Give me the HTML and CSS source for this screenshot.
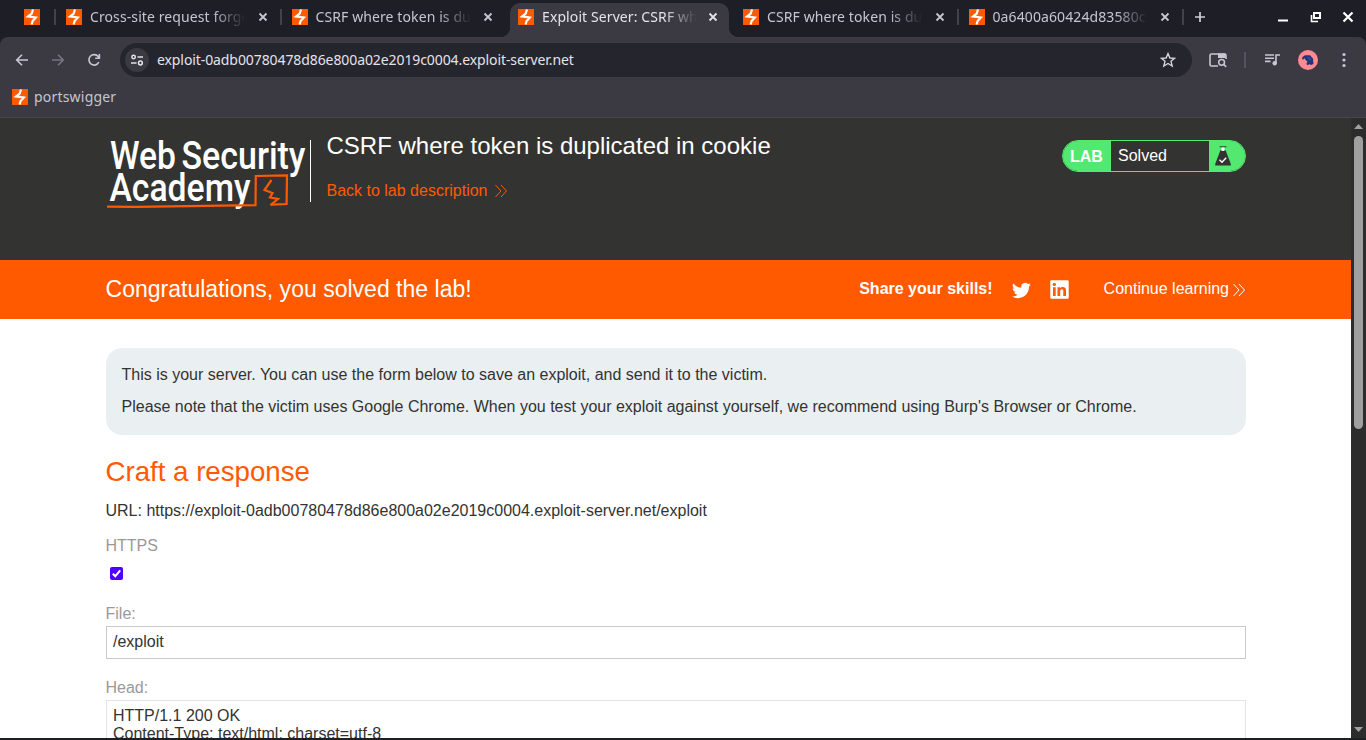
FILE: index.html
```html
<!DOCTYPE html>
<html lang="en">
<head>
<meta charset="utf-8">
<title>Exploit Server: CSRF where token is duplicated in cookie</title>
<link rel="stylesheet" href="styles.css">
</head>
<body>
<svg class="defs" width="0" height="0">
  <symbol id="fav" viewBox="0 0 16 16"><rect width="16" height="16" fill="#ff5a00"/><path d="M7.600 0.600H9.800L8.800 5.200 13 7.300 9.600 11.600 10.600 12.400 7 15.400 6.200 15.400 7.800 9.900 3 8 6.600 4Z" fill="#fff"/><path d="M8 4.500 6 7.300 8.600 8.300 10.200 7.600Z" fill="#fff"/><path d="M9.600 8.400 7.600 11.800 8.300 8.900Z" fill="#ff5a00"/></symbol>
  <symbol id="bolt" viewBox="0 0 16 16"><rect width="16" height="16" fill="#ff5a00"/><path d="M9 .500 7.700 4.500 4 7.400 11.800 8.500 8.600 12 7.600 15.500" fill="none" stroke="#fff" stroke-width="2.200"/></symbol>
  <symbol id="x" viewBox="0 0 10 10"><path d="M1.500 1.500 8.500 8.500M8.500 1.500 1.500 8.500" fill="none" stroke="currentColor" stroke-width="1.8"/></symbol>
  <symbol id="chev" viewBox="0 0 14 14"><path d="M1.500 1 7 7 1.500 13M7 1 12.500 7 7 13" fill="none" stroke="currentColor" stroke-width="1"/></symbol>
</svg>
<div class="window">
  <header class="tabs">
    <div class="pinned"><svg class="fav"><use href="#bolt"/></svg></div>
    <i class="sep"></i>
    <div class="tab"><svg class="fav"><use href="#bolt"/></svg><span class="title">Cross-site request forgery</span><svg class="close"><use href="#x"/></svg></div>
    <i class="sep"></i>
    <div class="tab"><svg class="fav"><use href="#bolt"/></svg><span class="title t-csrf">CSRF where token is duplicated</span><svg class="close"><use href="#x"/></svg></div>
    <i class="sep none"></i>
    <div class="tab active"><svg class="fav"><use href="#bolt"/></svg><span class="title">Exploit Server: CSRF where</span><svg class="close"><use href="#x"/></svg></div>
    <i class="sep none"></i>
    <div class="tab"><svg class="fav"><use href="#bolt"/></svg><span class="title">CSRF where token is duplicated</span><svg class="close"><use href="#x"/></svg></div>
    <i class="sep"></i>
    <div class="tab"><svg class="fav"><use href="#bolt"/></svg><span class="title">0a6400a60424d83580c</span><svg class="close"><use href="#x"/></svg></div>
    <i class="sep"></i>
    <svg class="plus" viewBox="0 0 12 12"><path d="M6 1V11M1 6H11" stroke="#d0ced8" stroke-width="1.7"/></svg>
    <div class="wincontrols">
      <svg width="12" height="12" viewBox="0 0 12 12"><path d="M1 9.500H11" stroke="#fff" stroke-width="2"/></svg>
      <svg width="12" height="12" viewBox="0 0 12 12"><path d="M4 2H10V7H4Z" fill="none" stroke="#fff" stroke-width="2"/><path d="M1.500 4V10.500H8" fill="none" stroke="#fff" stroke-width="1.600"/></svg>
      <svg width="12" height="12" viewBox="0 0 12 12"><path d="M1.500 1.500 10.500 10.500M10.500 1.500 1.500 10.500" stroke="#fff" stroke-width="2.200"/></svg>
    </div>
  </header>
  <div class="chrome">
    <div class="toolbar">
      <svg class="nav" viewBox="0 0 16 16"><path d="M14 8H3M8 2.700 2.700 8 8 13.300" fill="none" stroke="#c9c6d3" stroke-width="1.600"/></svg>
      <svg class="nav" viewBox="0 0 16 16"><path d="M2 8H13M8 2.700 13.300 8 8 13.300" fill="none" stroke="#777580" stroke-width="1.600"/></svg>
      <svg class="nav" viewBox="0 0 16 16"><path d="M12.800 10.200A5.200 5.200 0 1 1 12.200 4.600L13.300 6M13.400 2V6.200H9.200" fill="none" stroke="#c9c6d3" stroke-width="1.600"/></svg>
      <div class="omnibox">
        <span class="siteinfo"><svg width="14" height="14" viewBox="0 0 14 14" fill="none" stroke="#e4e2ea" stroke-width="1.500"><circle cx="3.600" cy="4" r="1.700"/><path d="M7.500 4H13M1 10H6.500"/><circle cx="10.400" cy="10" r="1.900"/></svg></span>
        <span class="url">exploit-0adb00780478d86e800a02e2019c0004.exploit-server.net</span>
        <svg class="star" viewBox="0 0 16 16"><path d="M8 1.600 9.900 6 14.600 6.300 11 9.300 12.200 14 8 11.500 3.800 14 5 9.300 1.400 6.300 6.100 6Z" fill="none" stroke="#d5d3dc" stroke-width="1.400"/></svg>
      </div>
      <svg class="lens" viewBox="0 0 18 16"><path d="M9 14H2.500Q1 14 1 12.500V3.500Q1 2 2.500 2H15.500Q17 2 17 3.500V7" fill="none" stroke="#c9c6d3" stroke-width="1.600"/><path d="M9 1.500H16.500V6H9Z" fill="#c9c6d3"/><circle cx="12.600" cy="10.300" r="2.900" fill="none" stroke="#c9c6d3" stroke-width="1.500"/><path d="M14.700 12.400 17.200 15" stroke="#c9c6d3" stroke-width="1.600"/></svg>
      <i class="toolsep"></i>
      <svg class="media" viewBox="0 0 16 14"><path d="M1 2H10M1 5.200H10M1 8.400H6.500M12 10V2H16" fill="none" stroke="#c9c6d3" stroke-width="1.600"/><circle cx="10.700" cy="10.200" r="2.200" fill="#c9c6d3"/></svg>
      <svg class="avatar" viewBox="0 0 20 20"><circle cx="10" cy="10" r="10" fill="#ff8b92"/><path d="M4 9 4.500 7 7 5.300 12 5.300 15 8.500 15.500 14 13 15 11.500 14.300 9 15.200 8.500 13.500 9.500 11.500 8 10.500 6.500 8.300 5.500 9.500Z" fill="#213578"/><path d="M9 7 12 7 13.500 10 11 10.500Z" fill="#2b4a94"/></svg>
      <svg class="more" viewBox="0 0 4 16" fill="#c9c6d3"><circle cx="2" cy="2.500" r="1.600"/><circle cx="2" cy="8" r="1.600"/><circle cx="2" cy="13.500" r="1.600"/></svg>
    </div>
    <div class="bookmarks"><svg class="fav"><use href="#bolt"/></svg><span>portswigger</span></div>
  </div>
  <div class="viewport">
    <main class="page">
      <section class="labhead">
        <svg class="logo" width="206" height="72" viewBox="0 0 206 72">
          <g class="logotext"><text x="4" y="31" textLength="66" lengthAdjust="spacingAndGlyphs">Web</text><text x="75.500" y="31" textLength="124" lengthAdjust="spacingAndGlyphs">Security</text><text x="3.500" y="63" textLength="141" lengthAdjust="spacingAndGlyphs">Academy</text></g>
          <path d="M1 68.700 30 68.800 149.500 67.200 149.800 38 181 37.300 180.600 66 164.500 66.600" fill="none" stroke="#ff5a00" stroke-width="2.200"/>
          <path d="M165.500 42 158.500 52 166.500 55 164 59.500 172 61 164.500 67" fill="none" stroke="#ff5a00" stroke-width="2.200"/>
        </svg>
        <div class="titles">
          <h2>CSRF where token is duplicated in cookie</h2>
          <a class="back">Back to lab description <svg class="chev"><use href="#chev"/></svg></a>
        </div>
        <div class="status">
          <b>LAB</b><span class="state">Solved</span>
          <span class="flaskbox"><svg width="16" height="21" viewBox="0 0 16 21"><path d="M5.500 4H10.500L15.800 18V19.500H0.200V18Z" fill="#333332"/><path d="M6.500 1H9.500V5H6.500Z" fill="#fff"/><path d="M4.500 .800H11.500" stroke="#333332"/><path d="M4.500 13.800 7 16.300 11.200 11.800" fill="none" stroke="#fff" stroke-width="1.400"/></svg></span>
        </div>
      </section>
      <section class="banner">
        <h3>Congratulations, you solved the lab!</h3>
        <div class="share">
          <b>Share your skills!</b>
          <svg class="twitter" viewBox="0 0 24 24" fill="#fff"><path d="M24 4.600a10 10 0 0 1-2.800.8 5 5 0 0 0 2.100-2.700 10 10 0 0 1-3.100 1.200 4.900 4.900 0 0 0-8.400 4.500A14 14 0 0 1 1.700 3.200a4.900 4.900 0 0 0 1.500 6.500 5 5 0 0 1-2.200-.6v.1a4.900 4.900 0 0 0 3.900 4.800 5 5 0 0 1-2.200.1 4.900 4.900 0 0 0 4.600 3.400A9.900 9.900 0 0 1 0 19.500a14 14 0 0 0 7.500 2.200c9.100 0 14-7.500 14-14v-.6A10 10 0 0 0 24 4.600z"/></svg>
          <svg class="linkedin" viewBox="0 0 19 19"><rect x=".3" y=".3" width="18.400" height="18.400" rx="1.200" fill="#fff"/><path d="M3 7.200H5.700V16H3ZM7.500 7.200H10.100V8.400C11.500 6.400 16 6.500 16 10.500V16H13.300V11.200C13.300 8.600 10.200 8.800 10.200 11.200V16H7.500Z" fill="#ff5a00"/><circle cx="4.350" cy="4.400" r="1.600" fill="#ff5a00"/></svg>
          <a class="continue">Continue learning<svg class="chev"><use href="#chev"/></svg></a>
        </div>
      </section>
      <section class="content">
        <div class="note"><p>This is your server. You can use the form below to save an exploit, and send it to the victim.</p><p>Please note that the victim uses Google Chrome. When you test your exploit against yourself, we recommend using Burp's Browser or Chrome.</p></div>
        <h1>Craft a response</h1>
        <p class="link">URL: https://exploit-0adb00780478d86e800a02e2019c0004.exploit-server.net/exploit</p>
        <label class="https">HTTPS</label>
        <svg class="check" viewBox="0 0 13 13"><rect width="13" height="13" rx="2" fill="#5000ff"/><path d="M2.800 6.700 5.300 9.200 10.200 3.400" fill="none" stroke="#fff" stroke-width="2"/></svg>
        <label class="file">File:</label>
        <div class="input">/exploit</div>
        <label class="head">Head:</label>
        <div class="textarea">HTTP/1.1 200 OK<br>Content-Type: text/html; charset=utf-8</div>
      </section>
    </main>
    <div class="scroll"><svg width="9" height="5" viewBox="0 0 9 5"><path d="M0 5 4.500 0 9 5Z" fill="#a0a0a0"/></svg><i class="thumb"></i><svg class="down" width="9" height="5" viewBox="0 0 9 5"><path d="M0 0H9L4.500 5Z" fill="#a0a0a0"/></svg></div>
  </div>
</div>
</body>
</html>
```
FILE: styles.css
```css
* { box-sizing: border-box; }
body, h1, h2, h3, p { margin: 0; font-weight: 400; }
body { overflow: hidden; background: #1e1e27; font: 16px/1.5 "Liberation Sans", Arial, sans-serif; color: #333332; }
.defs { position: absolute; }
svg { display: block; flex: none; }
.window { width: 1366px; height: 740px; display: flex; flex-direction: column; overflow: hidden; }
.tabs { height: 37px; display: flex; align-items: flex-start; background: #1e1e27; color: #c7c5d0; font: 14px/20px "Noto Sans", sans-serif; }
.fav { width: 16px; height: 16px; }
.pinned { padding: 9px 14px 0 24px; }
.sep { width: 2px; height: 16px; margin-top: 9px; background: #42414c; flex: none; }
.sep.none { background: none; }
.tab { width: 223.500px; height: 34px; margin-top: 3px; padding: 0 12px 6px 10px; display: flex; align-items: center; flex: none; }
.tab .title { width: 156px; margin-left: 8px; letter-spacing: .1px; white-space: nowrap; overflow: hidden; -webkit-mask-image: linear-gradient(90deg, #000 122px, transparent 155px); mask-image: linear-gradient(90deg, #000 122px, transparent 155px); }
.close { width: 10px; height: 10px; margin-left: 11px; margin-left: auto; }
.tab.active { position: relative; background: #3b3a43; color: #e4e2ea; width: 219px; margin-left: 3px; margin-right: 2px; border-radius: 10px 10px 0 0; padding-left: 8px; padding-right: 11px; }
.tab.active::before, .tab.active::after { content: ""; position: absolute; bottom: 0; width: 10px; height: 10px; }
.tab.active::before { left: -10px; background: radial-gradient(circle at 0 0, transparent 10px, #3b3a43 10.500px); }
.tab.active::after { right: -10px; background: radial-gradient(circle at 100% 0, transparent 10px, #3b3a43 10.500px); }
.plus { width: 12px; height: 12px; margin: 11px 0 0 10px; }
.wincontrols { margin: 11px 12px 0 auto; display: flex; gap: 20.500px; }
.chrome { height: 81px; background: #3b3a43; border-bottom: 1px solid #494847; border-radius: 8px 8px 0 0; flex: none; }
.toolbar { display: flex; align-items: center; height: 46px; padding-left: 14px; }
.nav { width: 16px; height: 16px; margin-right: 20px; }
.omnibox { width: 1072px; height: 34px; margin-left: -2px; border-radius: 17px; background: #25252e; display: flex; align-items: center; padding: 0 16px 0 5px; color: #e4e2ea; font: 14px/20px "Noto Sans", sans-serif; }
.siteinfo { width: 24px; height: 24px; border-radius: 12px; background: #3b3a43; display: grid; place-items: center; }
.url { margin-left: 8px; letter-spacing: -.09px; }
.star { width: 16px; height: 16px; margin-left: auto; }
.lens { width: 18px; height: 16px; margin-left: 17px; }
.toolsep { width: 2px; height: 16px; margin-left: 17px; background: #53525d; }
.media { width: 16px; height: 14px; margin-left: 18px; }
.avatar { width: 20px; height: 20px; margin-left: 18px; }
.more { width: 4px; height: 16px; margin-left: 24px; }
.bookmarks { display: flex; align-items: center; gap: 6px; height: 28px; padding-left: 12px; color: #c7c5d0; font: 14px/20px "Noto Sans", sans-serif; letter-spacing: .2px; }
.viewport { height: 620px; display: flex; flex: none; }
.page { width: 1351px; background: #fff; overflow: hidden; }
.labhead { height: 142px; background: #333332; display: flex; padding: 0 105px 0 106px; }
.logo { margin-top: 20px; }
.logotext { font: 500 38px Roboto, sans-serif; fill: #fff; }
.titles { margin-top: 22px; height: 62px; border-left: 1px solid #fff; margin-left: -2px; padding-left: 15.500px; color: #fff; }
.titles h2 { font-size: 24px; line-height: 28px; margin-top: -8px; }
.back { display: flex; align-items: center; gap: 7px; color: #ff5a00; line-height: 24px; margin-top: 19px; }
.chev { width: 14px; height: 14px; }
.status { width: 184px; height: 32px; margin: 22px 0 0 auto; border: 1px solid #53e870; border-radius: 16px; overflow: hidden; display: flex; line-height: 30px; color: #fff; }
.status b { width: 48px; background: #53e870; padding: 1px 0 0 7px; }
.state { flex: 1; padding-left: 7px; }
.flaskbox { width: 36px; padding: 5px 0 0 6px; background: #53e870; }
.banner { height: 59px; background: #ff5a00; color: #fff; display: flex; justify-content: space-between; align-items: center; padding: 0 105px 1px 105.500px; }
.banner h3 { font-size: 23.040px; }
.share { display: flex; align-items: center; }
.twitter { width: 19px; height: 19px; margin: 3px 0 0 19px; }
.linkedin { width: 19px; height: 19px; margin: 1px 35px 0 19px; }
.continue { display: flex; align-items: center; gap: 3px; }
.continue .chev { margin-top: 2px; }
.content { padding: 29px 105px 0 105.500px; display: flex; flex-direction: column; }
.note { height: 87px; background: #eaf0f2; border-radius: 16px; padding: 15px 16px; line-height: 24px; }
.note p + p { margin-top: 8px; }
.content h1 { color: #ff5a00; font-size: 27.650px; line-height: 32px; margin-top: 21px; }
.link { line-height: 24px; margin-top: 11px; }
label { color: #999; line-height: 24px; }
.https { margin-top: 11px; }
.check { width: 13px; height: 13px; margin: 8.500px 0 .500px 4.500px; }
.file { margin-top: 22px; }
.input { height: 33px; border: 1px solid #c8cbcc; padding: 3px 6.500px; line-height: 24px; }
.head { margin-top: 17px; }
.textarea { height: 120px; border: 1px solid #e4e4e4; padding: 6px 6.500px; line-height: 18px; }
.scroll { width: 15px; background: #2c2c2c; display: flex; flex-direction: column; align-items: center; padding: 6px 0; }
.thumb { width: 9px; height: 293px; border-radius: 5px; background: #9f9f9f; margin-top: 7px; }
.down { margin-top: auto; }
```
